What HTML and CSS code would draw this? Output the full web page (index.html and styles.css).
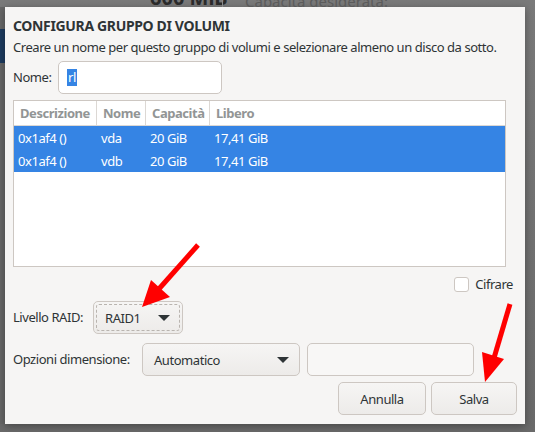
FILE: index.html
```html
<!DOCTYPE html>
<html lang="it">
<head>
<meta charset="utf-8">
<link rel="stylesheet" href="styles.css">
</head>
<body>
<div class="backdrop-top">
  <span class="bd-size">600 MiB</span>
  <span class="bd-sep"></span>
  <span class="bd-cap">Capacità desiderata:</span>
</div>
<div class="stage">
  <div class="side"><div class="side-blue"></div></div>
  <div class="dialog">
    <div class="title">CONFIGURA GRUPPO DI VOLUMI</div>
    <div class="subtitle">Creare un nome per questo gruppo di volumi e selezionare almeno un disco da sotto.</div>
    <div class="name-row">
      <span class="label">Nome:</span>
      <div class="entry name-entry"><span class="sel">rl</span></div>
    </div>
    <div class="table">
      <div class="trow thead">
        <div class="c1">Descrizione</div>
        <div class="c2">Nome</div>
        <div class="c3">Capacità</div>
        <div class="c4">Libero</div>
      </div>
      <div class="trow tsel">
        <div class="c1">0x1af4 ()</div>
        <div class="c2">vda</div>
        <div class="c3">20 GiB</div>
        <div class="c4">17,41 GiB</div>
      </div>
      <div class="trow tsel">
        <div class="c1">0x1af4 ()</div>
        <div class="c2">vdb</div>
        <div class="c3">20 GiB</div>
        <div class="c4">17,41 GiB</div>
      </div>
    </div>
    <div class="crypt-row">
      <span class="check"></span>
      <span class="label">Cifrare</span>
    </div>
    <div class="raid-row">
      <span class="label">Livello RAID:</span>
      <div class="combo raid-combo">
        <div class="focus">
          <span>RAID1</span>
          <span class="tri"></span>
        </div>
      </div>
    </div>
    <div class="size-row">
      <span class="label">Opzioni dimensione:</span>
      <div class="combo size-combo">
        <span>Automatico</span>
        <span class="tri"></span>
      </div>
      <div class="entry size-entry"></div>
    </div>
    <div class="btn-row">
      <div class="btn btn-cancel">Annulla</div>
      <div class="btn btn-save">Salva</div>
    </div>
  </div>
</div>
<svg class="arrows" width="535" height="432" viewBox="0 0 535 432">
  <line x1="198" y1="245" x2="158" y2="290" stroke="#ff0000" stroke-width="5"/>
  <polygon points="142,307 151,280 170,297" fill="#ff0000"/>
  <line x1="510" y1="304" x2="494" y2="358" stroke="#ff0000" stroke-width="5"/>
  <polygon points="485,382 482,352 504,359" fill="#ff0000"/>
</svg>
</body>
</html>
```
FILE: styles.css
```css
html, body {
  margin: 0;
  padding: 0;
}
body {
  width: 535px;
  height: 432px;
  overflow: hidden;
  background: linear-gradient(#7a7a7a, #6a6a6a);
  font-family: "Noto Sans", "DejaVu Sans", sans-serif;
  color: #2e3436;
  position: relative;
}
.backdrop-top {
  height: 7px;
  overflow: hidden;
  position: relative;
}
.bd-size {
  position: absolute;
  left: 150px;
  top: -12px;
  font-weight: bold;
  font-size: 20px;
  line-height: 20px;
  color: #2a2a2a;
}
.bd-sep {
  position: absolute;
  left: 222px;
  top: 0;
  width: 1px;
  height: 7px;
  background: #8a8a8a;
}
.bd-cap {
  position: absolute;
  left: 245px;
  top: -8px;
  font-size: 15px;
  line-height: 18px;
  color: #5b5b5b;
}
.stage {
  display: flex;
}
.side {
  width: 5px;
  background: #676767;
}
.side-blue {
  margin-top: 22px;
  height: 34px;
  background: #1d3b5f;
}
.dialog {
  width: 520px;
  height: 417px;
  box-sizing: border-box;
  background: #f6f5f4;
  padding: 0 8px;
  display: flex;
  flex-direction: column;
  box-shadow: 0 2px 8px rgba(0,0,0,0.35);
  font-size: 13px;
  letter-spacing: -0.45px;
}
.title {
  margin-top: 10px;
  font-weight: bold;
  font-size: 14px;
  line-height: 17px;
  letter-spacing: -0.35px;
  color: #2e3436;
}
.subtitle {
  margin-top: 5px;
  line-height: 17px;
  white-space: nowrap;
}
.label {
  line-height: 17px;
}
.name-row {
  display: flex;
  align-items: center;
  margin-top: 5px;
}
.name-row .label {
  width: 45px;
}
.entry {
  box-sizing: border-box;
  background: #ffffff;
  border: 1px solid #cdc7c2;
  border-radius: 5px;
}
.name-entry {
  width: 164px;
  height: 33px;
  display: flex;
  align-items: center;
  padding-left: 8px;
}
.sel {
  background: #3584e4;
  color: #ffffff;
  line-height: 17px;
  padding: 0 1px;
}
.table {
  margin-top: 6px;
  width: 493px;
  height: 167px;
  box-sizing: border-box;
  border: 1px solid #cdc7c2;
  background: #ffffff;
}
.trow {
  display: flex;
  height: 23px;
  align-items: center;
}
.thead {
  height: 25px;
  border-bottom: 1px solid #dcd8d4;
  color: #929595;
  font-weight: bold;
  box-sizing: border-box;
}
.thead > div {
  height: 100%;
  display: flex;
  align-items: center;
  box-sizing: border-box;
  border-right: 1px solid #dcd8d4;
  padding-left: 6px;
}
.thead > .c4 {
  border-right: none;
}
.c1 { width: 83px; }
.c2 { width: 49px; }
.c3 { width: 64px; }
.c4 { flex: 1; }
.tsel {
  background: #3584e4;
  color: #ffffff;
}
.tsel > div {
  padding-left: 4px;
  box-sizing: border-box;
}
.crypt-row {
  display: flex;
  align-items: center;
  justify-content: flex-end;
  gap: 6px;
  margin-top: 9px;
  padding-right: 4px;
}
.check {
  width: 15px;
  height: 15px;
  box-sizing: border-box;
  border: 1px solid #cdc7c2;
  border-radius: 3px;
  background: #ffffff;
}
.raid-row {
  display: flex;
  align-items: center;
  margin-top: 8px;
}
.raid-row .label {
  width: 80px;
}
.combo {
  box-sizing: border-box;
  border: 1px solid #cdc7c2;
  border-radius: 5px;
  background: linear-gradient(#f6f5f4, #edebe9);
  display: flex;
  align-items: center;
}
.raid-combo {
  width: 90px;
  height: 33px;
  padding: 2px;
}
.focus {
  flex: 1;
  height: 100%;
  box-sizing: border-box;
  border: 1px dashed #b9b4af;
  border-radius: 3px;
  display: flex;
  align-items: center;
  justify-content: space-between;
  padding: 0 9px 0 8px;
}
.tri {
  width: 0;
  height: 0;
  border-left: 6px solid transparent;
  border-right: 6px solid transparent;
  border-top: 6px solid #2e3436;
}
.size-row {
  display: flex;
  align-items: center;
  margin-top: 9px;
}
.size-row .label {
  width: 129px;
}
.size-combo {
  width: 158px;
  height: 33px;
  justify-content: space-between;
  padding: 0 10px 0 11px;
}
.size-entry {
  width: 167px;
  height: 33px;
  margin-left: 7px;
  background: #f8f7f6;
}
.btn-row {
  display: flex;
  justify-content: flex-end;
  gap: 5px;
  margin-top: 6px;
}
.btn {
  box-sizing: border-box;
  height: 33px;
  border: 1px solid #cdc7c2;
  border-radius: 5px;
  background: linear-gradient(#f6f5f4, #edebe9);
  display: flex;
  align-items: center;
  justify-content: center;
}
.btn-cancel { width: 88px; }
.btn-save { width: 86px; }
.arrows {
  position: absolute;
  left: 0;
  top: 0;
  pointer-events: none;
}
```
